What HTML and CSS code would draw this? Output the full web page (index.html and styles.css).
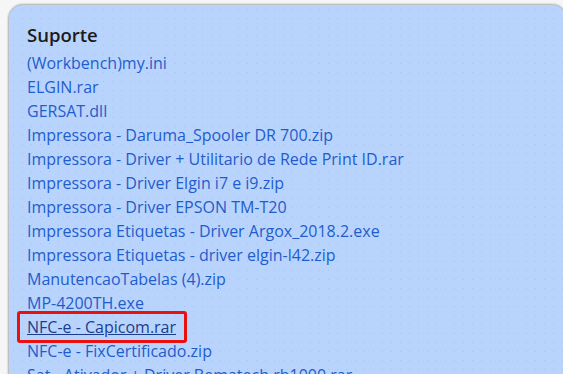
FILE: index.html
```html
<!DOCTYPE html>
<html lang="pt">
<head>
<meta charset="utf-8">
<link rel="stylesheet" href="styles.css">
</head>
<body>
<div class="panel">
  <h2 class="title">Suporte</h2>
  <ul class="files">
    <li><a href="#">(Workbench)my.ini</a></li>
    <li><a href="#">ELGIN.rar</a></li>
    <li><a href="#">GERSAT.dll</a></li>
    <li><a href="#">Impressora - Daruma_Spooler DR 700.zip</a></li>
    <li><a href="#">Impressora - Driver + Utilitario de Rede Print ID.rar</a></li>
    <li><a href="#">Impressora - Driver Elgin i7 e i9.zip</a></li>
    <li><a href="#">Impressora - Driver EPSON TM-T20</a></li>
    <li><a href="#">Impressora Etiquetas - Driver Argox_2018.2.exe</a></li>
    <li><a href="#">Impressora Etiquetas - driver elgin-l42.zip</a></li>
    <li><a href="#">ManutencaoTabelas (4).zip</a></li>
    <li><a href="#">MP-4200TH.exe</a></li>
    <li class="marked"><a href="#" class="active">NFC-e - Capicom.rar</a></li>
    <li><a href="#">NFC-e - FixCertificado.zip</a></li>
    <li><a href="#">Sat - Ativador + Driver Bematech rb1000.rar</a></li>
  </ul>
</div>
</body>
</html>
```
FILE: styles.css
```css
html, body {
  margin: 0;
  padding: 0;
  background: #f6f6f6;
  overflow: hidden;
  width: 563px;
  height: 374px;
}
.panel {
  margin: 5px 0 0 9px;
  width: 557px;
  height: 420px;
  box-sizing: border-box;
  padding: 17px 18px 0 18px;
  border-radius: 14px;
  background-color: #b9d4fc;
  background-image: radial-gradient(circle, rgba(140,160,215,0.35) 0.6px, transparent 1px);
  background-size: 9px 9px;
  box-shadow: 0 0 2px 1px rgba(0,0,0,0.3);
  font-family: "Open Sans", sans-serif;
}
.title {
  margin: 0 0 3px 0;
  font-size: 18.5px;
  font-weight: 600;
  line-height: 26px;
  color: #1b1b1b;
}
.files {
  list-style: none;
  margin: 0;
  padding: 0;
}
.files li {
  font-size: 16px;
  line-height: 24px;
  height: 24px;
  white-space: nowrap;
}
.files a {
  color: #1f5ccc;
  text-decoration: none;
}
.files li.marked {
  position: relative;
}
.files a.active {
  color: #1c3d8e;
  text-decoration: underline;
}
.files li.marked::before {
  content: "";
  position: absolute;
  left: -10px;
  top: -4px;
  width: 170px;
  height: 32px;
  box-sizing: border-box;
  border: 3px solid #ea1010;
  border-radius: 3px;
}
```
